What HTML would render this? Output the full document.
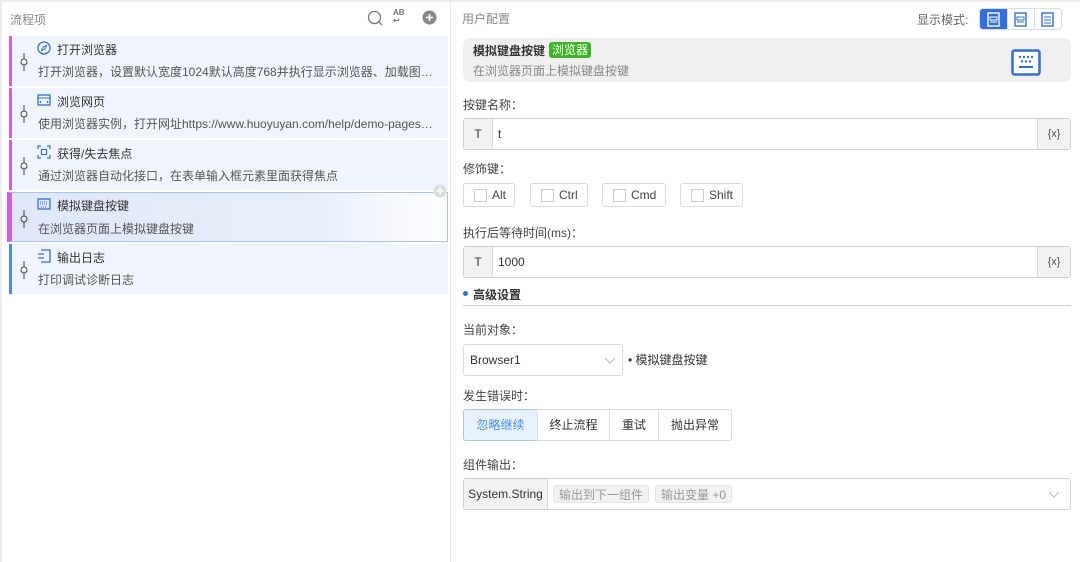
<!DOCTYPE html>
<html><head><meta charset="utf-8"><style>
*{box-sizing:border-box;margin:0;padding:0}
body{width:1080px;height:562px;background:#fff;font-family:"Liberation Sans","Noto Sans CJK SC",sans-serif;font-size:12px;color:#333;position:relative;overflow:hidden}
.a{position:absolute}
.item{position:absolute;left:9px;width:439px;height:50px;background:#f0f5fd;border-left:3px solid #d55fd9}
.item .t{position:absolute;left:45px;top:5px;font-size:12px;color:#333}
.item .d{position:absolute;left:26px;top:27px;font-size:12px;color:#555;white-space:nowrap}
.item .ic{position:absolute;left:25px;top:5px;width:14px;height:14px}
.item .pin{position:absolute;left:8px;top:17px;width:8px;height:18px}
.lbl{position:absolute;left:463px;font-size:12px;color:#444}
.inp{position:absolute;left:463px;width:608px;height:32px;border:1px solid #d0d0d0;border-radius:3px;background:#fff}
.inp .T{position:absolute;left:0;top:0;width:29px;height:30px;background:#f2f2f2;border-right:1px solid #d8d8d8;text-align:center;line-height:30px;color:#333}
.inp .v{position:absolute;left:34px;top:0;line-height:30px;color:#333}
.inp .x{position:absolute;right:0;top:0;width:33px;height:30px;background:#f2f2f2;border-left:1px solid #d8d8d8;text-align:center;line-height:30px;font-size:11px;color:#555}
.cb{position:absolute;top:183px;height:24px;border:1px solid #dcdcdc;border-radius:3px;line-height:22px;padding-left:28px;color:#444}
.cb:before{content:"";position:absolute;left:10px;top:5px;width:11px;height:11px;border:1px solid #ccc;background:#fff}
.bt{position:absolute;top:409px;height:32px;border:1px solid #dcdcdc;line-height:30px;text-align:center;color:#333;font-size:12px}
</style></head><body>
<div class="a" style="left:0;top:0;width:1080px;height:2px;background:#eee"></div>
<div class="a" style="left:450px;top:0;width:1px;height:562px;background:#e6e6e6"></div>
<div class="a" style="left:0;top:0;width:2px;height:562px;background:#eee"></div>
<div class="a" style="left:10px;top:11px;color:#888">流程项</div>
<svg class="a" style="left:367px;top:10px" width="16" height="16"><circle cx="7.5" cy="7.5" r="6" fill="none" stroke="#777" stroke-width="1.3"/><path d="M12 12l3 3" stroke="#777" stroke-width="1.3"/></svg>
<div class="a" style="left:393px;top:9px;font-size:8px;font-weight:bold;color:#777;line-height:8px">AB<br>↩</div>
<svg class="a" style="left:422px;top:10px" width="15" height="15"><circle cx="7.5" cy="7.5" r="7" fill="#888"/><path d="M7.5 4v7M4 7.5h7" stroke="#fff" stroke-width="1.6"/></svg>

<div class="item" style="top:36px"><svg class="pin" viewBox="0 0 8 18"><path d="M4 0v6M4 12v6" stroke="#444"/><circle cx="4" cy="9" r="3" fill="none" stroke="#444"/></svg><svg class="ic"><circle cx="7" cy="7" r="6" fill="none" stroke="#2f6fe0" stroke-width="1.3"/><path d="M9.5 4.5L8 8 4.5 9.5 6 6z" fill="none" stroke="#2f6fe0"/></svg><div class="t">打开浏览器</div><div class="d">打开浏览器，设置默认宽度1024默认高度768并执行显示浏览器、加载图…</div></div>
<div class="item" style="top:88px"><svg class="pin" viewBox="0 0 8 18"><path d="M4 0v6M4 12v6" stroke="#444"/><circle cx="4" cy="9" r="3" fill="none" stroke="#444"/></svg><svg class="ic"><rect x="1" y="2" width="12" height="10" fill="none" stroke="#2f6fe0" stroke-width="1.3"/><path d="M1 5h12M4 8l-1 1 1 1M10 8l1 1-1 1" stroke="#2f6fe0" fill="none"/></svg><div class="t">浏览网页</div><div class="d">使用浏览器实例，打开网址https://www.huoyuyan.com/help/demo-pages…</div></div>
<div class="item" style="top:140px"><svg class="pin" viewBox="0 0 8 18"><path d="M4 0v6M4 12v6" stroke="#444"/><circle cx="4" cy="9" r="3" fill="none" stroke="#444"/></svg><svg class="ic"><path d="M1 4V1h3M10 1h3v3M13 10v3h-3M4 13H1v-3" stroke="#2f6fe0" fill="none" stroke-width="1.3"/><rect x="4.5" y="4.5" width="5" height="5" fill="none" stroke="#2f6fe0" stroke-width="1.2"/></svg><div class="t">获得/失去焦点</div><div class="d">通过浏览器自动化接口，在表单输入框元素里面获得焦点</div></div>
<div class="item" style="top:192px;left:7px;width:441px;border-left-width:5px;background:linear-gradient(90deg,#dfe8fa,#e8effb 70%,#fff);border-top:1px solid #a9c1ef;border-right:1px solid #a9c1ef;border-bottom:1px solid #a9c1ef"><svg class="pin" viewBox="0 0 8 18"><path d="M4 0v6M4 12v6" stroke="#444"/><circle cx="4" cy="9" r="3" fill="none" stroke="#444"/></svg><svg class="ic" style="top:4px"><rect x="1" y="2" width="12" height="10" fill="none" stroke="#2f6fe0" stroke-width="1.3"/><path d="M3 5h8M3 7h8M4 10h6" stroke="#2f6fe0" stroke-dasharray="1 1"/></svg><div class="t" style="top:4px">模拟键盘按键</div><div class="d" style="top:27px">在浏览器页面上模拟键盘按键</div></div>
<svg class="a" style="left:433px;top:184px" width="14" height="14"><circle cx="7" cy="7" r="6.5" fill="#ddd"/><path d="M7 3.5v7M3.5 7h7" stroke="#fff" stroke-width="1.5"/></svg>
<div class="item" style="top:244px;border-left-color:#4a8fd8"><svg class="pin" viewBox="0 0 8 18"><path d="M4 0v6M4 12v6" stroke="#444"/><circle cx="4" cy="9" r="3" fill="none" stroke="#444"/></svg><svg class="ic"><path d="M4 1h9v12H4M1 5h6M1 9h6" stroke="#2f6fe0" fill="none" stroke-width="1.3"/></svg><div class="t">输出日志</div><div class="d">打印调试诊断日志</div></div>

<div class="a" style="left:462px;top:10px;color:#888">用户配置</div>
<div class="a" style="left:917px;top:11px;color:#666">显示模式:</div>
<div class="a" style="left:979px;top:8px;width:83px;height:22px;border:1px solid #ddd;border-radius:4px;overflow:hidden">
<div class="a" style="left:0;top:0;width:27px;height:22px;background:#2f6fe0"></div>
<div class="a" style="left:27px;top:0;width:1px;height:22px;background:#ddd"></div><div class="a" style="left:54px;top:0;width:1px;height:22px;background:#ddd"></div>
<svg class="a" style="left:7px;top:3px" width="13" height="15"><rect x="1" y="1" width="11" height="13" fill="none" stroke="#fff" stroke-width="1.4"/><path d="M3 5h7v3H3zM3 10h7" stroke="#fff" fill="none"/></svg>
<svg class="a" style="left:34px;top:3px" width="13" height="15"><rect x="1" y="1" width="11" height="13" fill="none" stroke="#2f6fe0" stroke-width="1.4"/><path d="M3 5h7v3H3zM3 10h7" stroke="#2f6fe0" fill="none"/></svg>
<svg class="a" style="left:61px;top:3px" width="13" height="15"><rect x="1" y="1" width="11" height="13" fill="none" stroke="#2f6fe0" stroke-width="1.4"/><path d="M3 5h7M3 8h7M3 11h7" stroke="#2f6fe0"/></svg>
</div>
<div class="a" style="left:463px;top:38px;width:608px;height:44px;background:#f0f0f0;border-radius:7px"></div>
<div class="a" style="left:473px;top:42px;font-weight:bold;color:#333">模拟键盘按键</div>
<div class="a" style="left:549px;top:42px;padding:0 3px;height:16px;line-height:16px;background:#3bb524;color:#fff;border-radius:3px">浏览器</div>
<div class="a" style="left:473px;top:62px;color:#888">在浏览器页面上模拟键盘按键</div>
<svg class="a" style="left:1011px;top:49px" width="30" height="27"><rect x="1.5" y="1.5" width="27" height="24" rx="2" fill="#fff" stroke="#2f6fe0" stroke-width="2.5"/><g fill="#2f6fe0"><circle cx="9" cy="8" r="1.2"/><circle cx="13" cy="8" r="1.2"/><circle cx="17" cy="8" r="1.2"/><circle cx="21" cy="8" r="1.2"/><circle cx="11" cy="12.5" r="1.2"/><circle cx="15" cy="12.5" r="1.2"/><circle cx="19" cy="12.5" r="1.2"/><rect x="8" y="17" width="14" height="2"/></g></svg>

<div class="lbl" style="top:96px">按键名称：</div>
<div class="inp" style="top:118px"><div class="T">T</div><div class="v">t</div><div class="x">{x}</div></div>
<div class="lbl" style="top:160px">修饰键：</div>
<div class="cb" style="left:463px;width:52px">Alt</div>
<div class="cb" style="left:530px;width:58px">Ctrl</div>
<div class="cb" style="left:602px;width:64px">Cmd</div>
<div class="cb" style="left:680px;width:63px">Shift</div>
<div class="lbl" style="top:224px">执行后等待时间(ms)：</div>
<div class="inp" style="top:246px"><div class="T">T</div><div class="v">1000</div><div class="x">{x}</div></div>
<div class="a" style="left:463px;top:291px;width:5px;height:5px;border-radius:50%;background:#2f6fe0"></div>
<div class="a" style="left:473px;top:286px;font-weight:bold;color:#333">高级设置</div>
<div class="a" style="left:463px;top:305px;width:608px;height:1px;background:#ccc"></div>
<div class="lbl" style="top:321px">当前对象：</div>
<div class="a" style="left:463px;top:344px;width:160px;height:32px;border:1px solid #dcdcdc;border-radius:3px;line-height:30px;padding-left:6px;color:#333">Browser1<svg class="a" style="left:140px;top:12px" width="12" height="8"><path d="M1 1l5 5 5-5" stroke="#bbb" fill="none"/></svg></div>
<div class="a" style="left:628px;top:351px;color:#333">• 模拟键盘按键</div>
<div class="lbl" style="top:387px">发生错误时：</div>
<div class="bt" style="left:463px;width:75px;background:#e8f2ff;border-color:#a9c8f5;color:#4a8ef0;border-radius:3px 0 0 3px">忽略继续</div>
<div class="bt" style="left:537px;width:73px">终止流程</div>
<div class="bt" style="left:609px;width:50px">重试</div>
<div class="bt" style="left:658px;width:74px;border-radius:0 3px 3px 0">抛出异常</div>
<div class="lbl" style="top:456px">组件输出：</div>
<div class="a" style="left:463px;top:478px;width:608px;height:32px;border:1px solid #d0d0d0;border-radius:3px">
<div class="a" style="left:0;top:0;width:84px;height:30px;background:#f2f2f2;border-right:1px solid #d8d8d8;line-height:30px;text-align:center;color:#333">System.String</div>
<div class="a" style="left:89px;top:6px;height:18px;line-height:18px;padding:0 5px;background:#f2f2f2;border:1px solid #e4e4e4;border-radius:3px;color:#999">输出到下一组件</div>
<div class="a" style="left:191px;top:6px;height:18px;line-height:18px;padding:0 5px;background:#f2f2f2;border:1px solid #e4e4e4;border-radius:3px;color:#999">输出变量 +0</div>
<svg class="a" style="left:584px;top:12px" width="12" height="8"><path d="M1 1l5 5 5-5" stroke="#bbb" fill="none"/></svg>
</div>
</body></html>
